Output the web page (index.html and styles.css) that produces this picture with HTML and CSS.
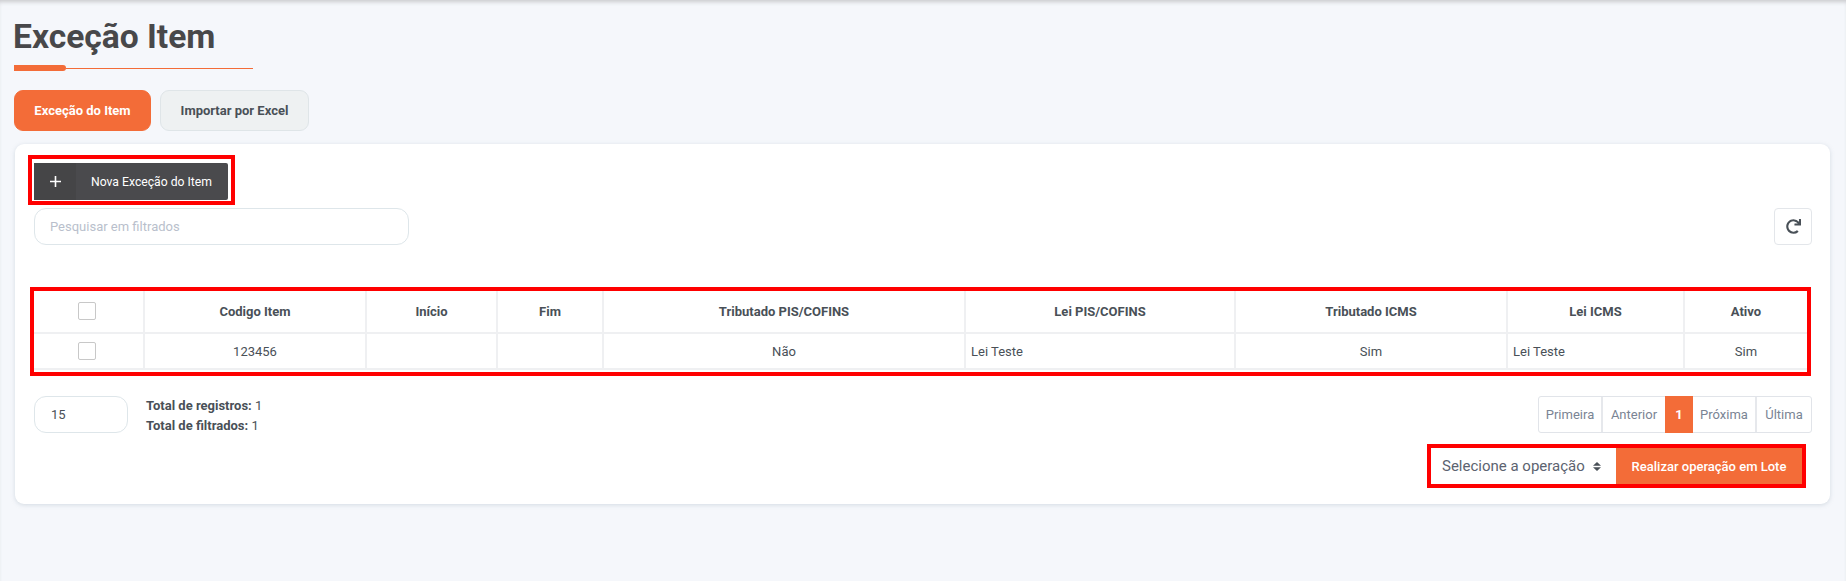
FILE: index.html
```html
<!DOCTYPE html>
<html lang="pt-BR">
<head>
<meta charset="UTF-8" />
<meta name="viewport" content="width=device-width, initial-scale=1.0"/>
<title>Exceção Item</title>
<link rel="stylesheet" href="styles.css">
</head>
<body>

<h1 class="page-title">Exceção Item</h1>
<div class="title-rule"><span class="rule-thick"></span><span class="rule-thin"></span></div>

<div class="tabs">
<button class="tab tab-active">Exceção do Item</button>
<button class="tab">Importar por Excel</button>
</div>

<div class="card">
<div class="mark mark-new">
<button class="btn-new">
<span class="btn-new-icon">
<svg width="11" height="11" viewBox="0 0 11 11"><path d="M5.5 0v11M0 5.5h11" stroke="#fff" stroke-width="1.6" fill="none"/></svg>
</span>
<span class="btn-new-text">Nova Exceção do Item</span>
</button>
</div>

<div class="search-row">
<input class="search" type="text" placeholder="Pesquisar em filtrados" />
<button class="btn-refresh">
<svg width="15" height="15" viewBox="0 0 512 512"><path fill="#495057" d="M500.33 0h-47.41a12 12 0 0 0-12 12.57l4 82.76A247.42 247.42 0 0 0 256 8C119.34 8 7.9 119.53 8 256.19 8.1 393.07 119.1 504 256 504a247.1 247.1 0 0 0 166.18-63.91 12 12 0 0 0 .48-17.43l-34-34a12 12 0 0 0-16.38-.55A176 176 0 1 1 402.1 157.8l-101.53-4.87a12 12 0 0 0-12.57 12v47.41a12 12 0 0 0 12 12h200.33a12 12 0 0 0 12-12V12a12 12 0 0 0-12-12z"/></svg>
</button>
</div>

<div class="mark mark-table">
<table class="grid">
<thead>
<tr>
<th><input class="check" type="checkbox" /></th>
<th>Codigo Item</th>
<th>Início</th>
<th>Fim</th>
<th>Tributado PIS/COFINS</th>
<th>Lei PIS/COFINS</th>
<th>Tributado ICMS</th>
<th>Lei ICMS</th>
<th>Ativo</th>
</tr>
</thead>
<tbody>
<tr>
<td><input class="check" type="checkbox" /></td>
<td>123456</td>
<td></td>
<td></td>
<td>Não</td>
<td class="left">Lei Teste</td>
<td>Sim</td>
<td class="left">Lei Teste</td>
<td>Sim</td>
</tr>
</tbody>
</table>
</div>

<div class="footer-row">
<div class="page-size">15</div>
<div class="totals">
<div><b>Total de registros:</b> 1</div>
<div><b>Total de filtrados:</b> 1</div>
</div>
<div class="pager">
<a class="w-first">Primeira</a>
<a class="w-prev">Anterior</a>
<a class="current">1</a>
<a class="w-next">Próxima</a>
<a class="w-last">Última</a>
</div>
</div>

<div class="batch-row">
<div class="mark mark-batch">
<div class="batch-select">
<span>Selecione a operação</span>
<svg width="8" height="9" viewBox="0 0 8 9"><path fill="#495057" d="M4 0l4 3.7H0zM4 9L0 5.3h8z"/></svg>
</div>
<button class="btn-batch">Realizar operação em Lote</button>
</div>
</div>
</div>

</body>
</html>
```

FILE: styles.css
```css
* {
box-sizing: border-box;
}
body {
margin: 0;
padding: 14px 16px 0 13px;
min-height: 581px;
background-color: #f5f7fb;
color: #495057;
font-family: Roboto, sans-serif;
box-shadow: inset 0 4px 4px -2px #c9cacd;
}

.page-title {
margin: 0;
font-size: 33.6px;
line-height: 45px;
font-weight: 700;
color: #48484a;
}

.title-rule {
display: flex;
align-items: center;
width: 239px;
height: 6px;
margin: 6px 0 0 1px;
}
.rule-thick {
width: 52px;
height: 6px;
background-color: #f36c38;
border-radius: 0 3px 3px 0;
}
.rule-thin {
flex: 1;
height: 1px;
background-color: #f36c38;
}

.tabs {
display: flex;
gap: 9px;
margin: 19px 0 0 1px;
}
.tab {
height: 41px;
padding: 0;
width: 149px;
font-family: Roboto, sans-serif;
font-size: 13px;
font-weight: 700;
color: #495057;
background-color: #eef1f2;
border: 1px solid #dfe5e8;
border-radius: 9px;
}
.tab-active {
width: 137px;
color: #fff;
background-color: #f36c38;
border-color: #f36c38;
}

.card {
margin: 13px 0 0 2px;
padding: 11px 18px 16px 19px;
background-color: #fff;
border-radius: 9px;
box-shadow: 0 1px 4px rgba(150, 165, 180, 0.35);
}

.mark {
border: 4px solid #f00;
}
.mark-new {
display: inline-block;
margin-left: -6px;
padding: 4px 3px 1px 2px;
vertical-align: top;
}
.btn-new {
display: flex;
align-items: stretch;
width: 194px;
height: 37px;
padding: 0;
font-family: Roboto, sans-serif;
font-size: 12.2px;
color: #fff;
background-color: #4a4a4d;
border: none;
border-radius: 2px;
}
.btn-new-icon {
display: flex;
align-items: center;
justify-content: center;
width: 42px;
background-color: #454547;
}
.btn-new-text {
align-self: center;
margin-left: 15px;
}

.search-row {
display: flex;
justify-content: space-between;
margin-top: 3px;
}
.search {
width: 375px;
height: 37px;
padding: 0 15px;
font-family: Roboto, sans-serif;
font-size: 13px;
border: 1px solid #dee6ea;
border-radius: 12px;
outline: none;
}
.search::placeholder {
color: #b9bfcc;
}
.btn-refresh {
display: flex;
align-items: center;
justify-content: center;
width: 38px;
height: 37px;
padding: 0;
background-color: #fff;
border: 1px solid #e3e6ea;
border-radius: 4px;
}

.mark-table {
margin: 42px 1px 0 -4px;
padding-bottom: 2px;
}
.grid {
width: 100%;
table-layout: fixed;
border-collapse: collapse;
font-size: 13px;
}
.grid th,
.grid td {
padding: 0 5px;
text-align: center;
border-right: 2px solid #eff0f2;
border-bottom: 2px solid #eff0f2;
}
.grid th {
height: 42px;
font-weight: 700;
}
.grid td {
height: 36px;
}
.grid th:nth-child(1) { width: 110px; }
.grid th:nth-child(2) { width: 222px; }
.grid th:nth-child(3) { width: 131px; }
.grid th:nth-child(4) { width: 106px; }
.grid th:nth-child(5) { width: 362px; }
.grid th:nth-child(6) { width: 270px; }
.grid th:nth-child(7) { width: 272px; }
.grid th:nth-child(8) { width: 177px; }
.grid th:last-child,
.grid td:last-child {
border-right: none;
}
.grid td.left {
text-align: left;
}
.check {
display: block;
width: 18px;
height: 18px;
margin: 0 0 0 39px;
appearance: none;
background-color: #fff;
border: 1px solid #c8c8c8;
border-radius: 2px;
}
.grid th .check {
margin-bottom: 2px;
}

.footer-row {
display: flex;
align-items: center;
height: 37px;
margin-top: 20px;
}
.page-size {
display: flex;
align-items: center;
width: 94px;
height: 37px;
padding-left: 16px;
font-size: 13px;
border: 1px solid #dee6ea;
border-radius: 12px;
}
.totals {
margin-left: 18px;
padding-top: 2px;
font-size: 13px;
line-height: 20px;
}
.totals b {
font-weight: 700;
}
.pager {
display: flex;
height: 37px;
margin-left: auto;
font-size: 13px;
color: #7a8494;
border: 1px solid #e1e4e9;
border-radius: 3px;
}
.pager a {
display: flex;
align-items: center;
justify-content: center;
border-right: 2px solid #e6e8ec;
}
.pager a:last-child {
border-right: none;
}
.pager .w-first { width: 64px; }
.pager .w-prev { width: 62px; border-right: none; }
.pager .w-next { width: 64px; }
.pager .w-last { width: 54px; }
.pager .current {
width: 28px;
margin: -1px 0;
color: #fff;
font-weight: 700;
background-color: #f36c38;
border-right: none;
}

.batch-row {
display: flex;
justify-content: flex-end;
margin: 11px 6px 0 0;
}
.mark-batch {
display: flex;
width: 379px;
height: 44px;
}
.batch-select {
display: flex;
align-items: center;
gap: 8px;
width: 185px;
padding-left: 11px;
font-size: 15px;
color: #5c6370;
}
.btn-batch {
flex: 1;
padding: 0;
font-family: Roboto, sans-serif;
font-size: 13px;
font-weight: 500;
color: #fff;
background-color: #f36c38;
border: none;
}
```
